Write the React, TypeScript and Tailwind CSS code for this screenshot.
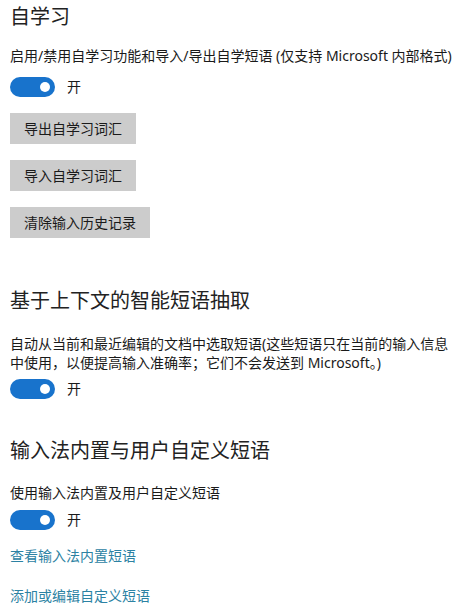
import { useState } from "react";

const font = "font-['Segoe_UI','Noto_Sans','Noto_Sans_CJK_SC',sans-serif]";

function Toggle({ on, onChange }: { on: boolean; onChange: () => void }) {
  return (
    <div className="flex h-[20px] items-center">
      <button
        type="button"
        onClick={onChange}
        className={`flex h-[20px] w-[45px] items-center rounded-full px-[5px] ${
          on ? "justify-end bg-[#1873cc]" : "justify-start border-2 border-[#333] bg-white"
        }`}
      >
        <span className={`block h-[10px] w-[10px] rounded-full ${on ? "bg-white" : "bg-[#333]"}`} />
      </button>
      <span className="ml-[12px] text-[14px] leading-[20px] text-[#1a1a1a]">{on ? "开" : "关"}</span>
    </div>
  );
}

function GrayButton({ children, className = "" }: { children: string; className?: string }) {
  return (
    <button
      type="button"
      className={`flex h-[31px] w-fit items-center bg-[#cccccc] px-[14px] text-[14px] text-[#1a1a1a] ${className}`}
    >
      {children}
    </button>
  );
}

export default function App() {
  const [selfLearn, setSelfLearn] = useState(true);
  const [smartPhrase, setSmartPhrase] = useState(true);
  const [customPhrase, setCustomPhrase] = useState(true);

  return (
    <div className={`min-h-[610px] w-[465px] bg-white px-[10px] pt-[3px] text-[#1a1a1a] ${font}`}>
      <h2 className="text-[20px] leading-[28px] font-normal text-[#222]">自学习</h2>
      <p className="mt-[15px] text-[14px] leading-[20px]">
        启用/禁用自学习功能和导入/导出自学短语 (仅支持 Microsoft 内部格式)
      </p>
      <div className="mt-[11px]">
        <Toggle on={selfLearn} onChange={() => setSelfLearn(!selfLearn)} />
      </div>
      <div className="mt-[16px] flex flex-col gap-[16px]">
        <GrayButton>导出自学习词汇</GrayButton>
        <GrayButton>导入自学习词汇</GrayButton>
        <GrayButton>清除输入历史记录</GrayButton>
      </div>

      <h2 className="mt-[49px] text-[20px] leading-[28px] font-normal text-[#222]">基于上下文的智能短语抽取</h2>
      <p className="mt-[19px] text-[14px] leading-[19px]">
        自动从当前和最近编辑的文档中选取短语(这些短语只在当前的输入信息中使用，以便提高输入准确率；它们不会发送到 Microsoft。)
      </p>
      <div className="mt-[7px]">
        <Toggle on={smartPhrase} onChange={() => setSmartPhrase(!smartPhrase)} />
      </div>

      <h2 className="mt-[38px] text-[20px] leading-[28px] font-normal text-[#222]">输入法内置与用户自定义短语</h2>
      <p className="mt-[18px] text-[14px] leading-[20px]">使用输入法内置及用户自定义短语</p>
      <div className="mt-[7px]">
        <Toggle on={customPhrase} onChange={() => setCustomPhrase(!customPhrase)} />
      </div>
      <a href="#" className="mt-[16px] block text-[14px] leading-[20px] text-[#2c82a3]">
        查看输入法内置短语
      </a>
      <a href="#" className="mt-[20px] block text-[14px] leading-[20px] text-[#2c82a3]">
        添加或编辑自定义短语
      </a>
    </div>
  );
}
